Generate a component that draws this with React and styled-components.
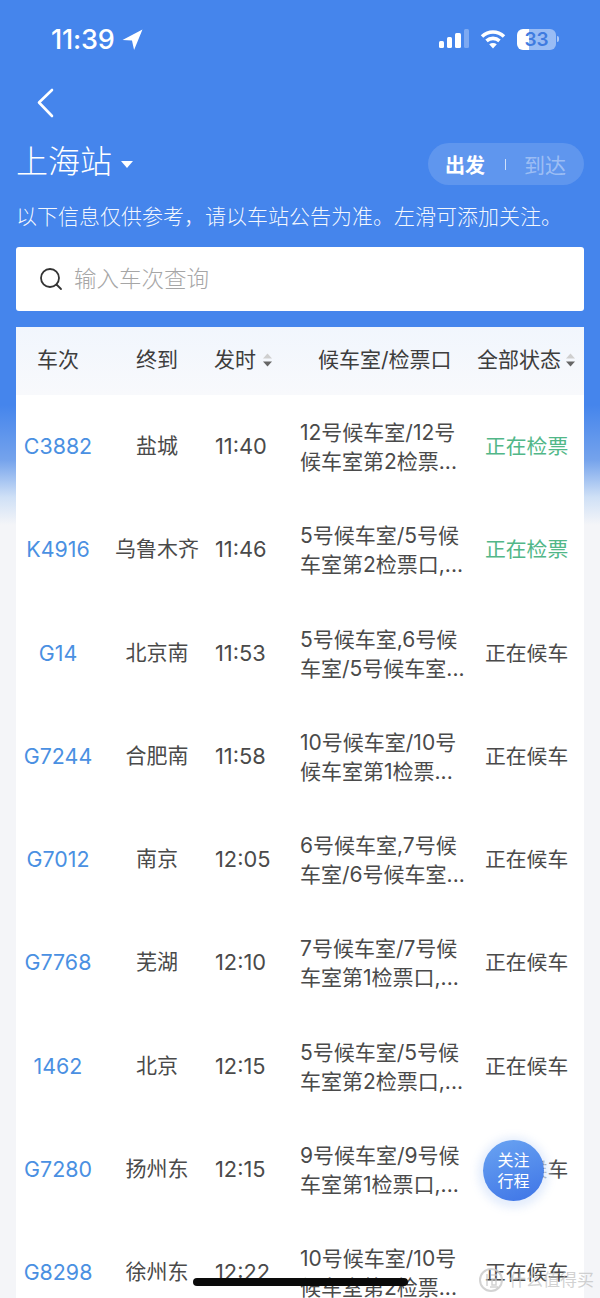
import React from "react";
import styled, { createGlobalStyle } from "styled-components";

const Global = createGlobalStyle`
  html, body { margin: 0; padding: 0; background: #f4f5f9; }
  * { box-sizing: border-box; }
`;

const Page = styled.div`
  position: relative;
  width: 600px;
  height: 1298px;
  overflow: hidden;
  font-family: Inter, "Noto Sans CJK SC", sans-serif;
  color: #444;
  background: linear-gradient(180deg, #4585ec 0, #4585ec 405px, #75a3ec 460px, #cfe0f6 497px, #f4f5f8 525px);
`;

const StatusBar = styled.div`
  height: 80px;
  padding: 22px 44px 0 51px;
  display: flex;
  align-items: flex-start;
  justify-content: space-between;
  color: #fff;
`;

const Clock = styled.div`
  display: flex;
  align-items: center;
  gap: 7px;
  height: 34px;
  font-size: 27px;
  font-weight: 500;
  letter-spacing: -0.2px;
`;

const StatusIcons = styled.div`
  display: flex;
  align-items: center;
  gap: 11px;
  height: 34px;
`;

const Battery = styled.div`
  position: relative;
  width: 39px;
  height: 21px;
  border-radius: 6px;
  background: linear-gradient(90deg, #fff 0, #fff 30%, rgba(255,255,255,.45) 30%);
  color: #3f7be0;
  font-size: 19px;
  font-weight: 600;
  line-height: 21px;
  text-align: center;
  &::after {
    content: "";
    position: absolute;
    right: -3px;
    top: 7px;
    width: 2px;
    height: 6px;
    border-radius: 0 2px 2px 0;
    background: rgba(255,255,255,.55);
  }
`;

const BackRow = styled.div`
  height: 46px;
  padding-left: 36px;
  display: flex;
  align-items: center;
`;

const TitleRow = styled.div`
  height: 76px;
  padding: 0 16px;
  display: flex;
  align-items: center;
  justify-content: space-between;
`;

const StationName = styled.div`
  display: flex;
  align-items: center;
  gap: 9px;
  margin-top: -4px;
  color: #fff;
  font-size: 32px;
  font-weight: 300;
  line-height: 40px;
`;

const Caret = styled.span`
  width: 0;
  height: 0;
  margin-top: 4px;
  border-left: 6.5px solid transparent;
  border-right: 6.5px solid transparent;
  border-top: 7.5px solid #fff;
`;

const Toggle = styled.div`
  width: 156px;
  height: 42px;
  border-radius: 21px;
  background: rgba(255,255,255,.14);
  display: flex;
  align-items: center;
  padding-left: 17px;
  font-size: 21px;
  color: #fff;
`;

const ToggleOn = styled.span`
  font-size: 20px;
  font-weight: 700;
`;

const ToggleSep = styled.span`
  width: 1px;
  height: 11px;
  margin: 0 18px 0 20px;
  background: rgba(255,255,255,.7);
`;

const ToggleOff = styled.span`
  color: rgba(255,255,255,.4);
`;

const Notice = styled.div`
  padding: 0 16px;
  height: 45px;
  color: rgba(255,255,255,.95);
  font-size: 21px;
  font-weight: 300;
  line-height: 30px;
  white-space: nowrap;
`;

const SearchBox = styled.div`
  margin: 0 16px;
  height: 64px;
  border-radius: 3px;
  background: #fff;
  display: flex;
  align-items: center;
  gap: 11px;
  padding-left: 23px;
  color: #a6a6a6;
  font-size: 22.5px;
  font-weight: 300;
`;

const SearchText = styled.span`
  margin-top: -5px;
`;

const Table = styled.div`
  margin: 16px 16px 0;
  background: #fff;
  border-radius: 2px 2px 0 0;
`;

const Row = styled.div`
  display: grid;
  grid-template-columns: 84px 114px 85px 178px 1fr;
  align-items: center;
  height: ${p => p.$h}px;
  background: ${p => p.$head ? "linear-gradient(180deg, #f1f6fd, #f8f9fc)" : "#fff"};
`;

const HeadCell = styled.div`
  display: flex;
  align-items: center;
  justify-content: ${p => p.$left ? "flex-start" : "center"};
  gap: ${p => p.$gap || 6}px;
  margin-top: -5px;
  padding-left: ${p => p.$pad || 0}px;
  color: #3d3d3d;
  font-size: 21px;
  font-weight: 400;
  white-space: nowrap;
`;

const SortIcon = styled.svg`
  flex: none;
  margin-top: 4px;
`;

const TrainNo = styled.div`
  text-align: center;
  color: #4a90e2;
  font-size: 21.4px;
  font-weight: 400;
`;

const Dest = styled.div`
  margin-top: -4px;
  text-align: center;
  color: #4a4a4a;
  font-size: 21px;
  font-weight: 400;
  white-space: nowrap;
`;

const Time = styled.div`
  margin-left: 1px;
  color: #4a4a4a;
  font-size: 21.8px;
  font-weight: 400;
  white-space: nowrap;
`;

const Room = styled.div`
  margin: 2px 0 0 1px;
  color: #4a4a4a;
  font-size: 21px;
  font-weight: 400;
  line-height: 29px;
  white-space: pre;
`;

const Status = styled.div`
  margin: -2px 0 0 8px;
  color: ${p => p.$on ? "#52b788" : "#4a4a4a"};
  font-size: 20.8px;
  font-weight: 400;
  white-space: nowrap;
`;

const Fab = styled.div`
  position: absolute;
  left: 483px;
  top: 1140px;
  width: 61px;
  height: 61px;
  border-radius: 50%;
  background: linear-gradient(160deg, #6aa4f2, #3e74e6);
  box-shadow: 0 2px 8px 5px rgba(225,235,252,.9);
  color: #fff;
  display: flex;
  align-items: center;
  justify-content: center;
  text-align: center;
  font-size: 16px;
  line-height: 21px;
`;

const HomeBar = styled.div`
  position: absolute;
  left: 193px;
  top: 1278px;
  width: 215px;
  height: 8px;
  border-radius: 4px;
  background: #0a0a0a;
`;

const Watermark = styled.div`
  position: absolute;
  left: 478px;
  top: 1267px;
  display: flex;
  align-items: center;
  gap: 5px;
  color: rgba(190,190,190,.7);
  font-size: 17px;
  line-height: 26px;
  white-space: nowrap;
`;

const rows = [
  ["C3882", "盐城", "11:40", "12号候车室/12号\n候车室第2检票...", "正在检票", true],
  ["K4916", "乌鲁木齐", "11:46", "5号候车室/5号候\n车室第2检票口,...", "正在检票", true],
  ["G14", "北京南", "11:53", "5号候车室,6号候\n车室/5号候车室...", "正在候车"],
  ["G7244", "合肥南", "11:58", "10号候车室/10号\n候车室第1检票...", "正在候车"],
  ["G7012", "南京", "12:05", "6号候车室,7号候\n车室/6号候车室...", "正在候车"],
  ["G7768", "芜湖", "12:10", "7号候车室/7号候\n车室第1检票口,...", "正在候车"],
  ["1462", "北京", "12:15", "5号候车室/5号候\n车室第2检票口,...", "正在候车"],
  ["G7280", "扬州东", "12:15", "9号候车室/9号候\n车室第1检票口,...", "正在候车"],
  ["G8298", "徐州东", "12:22", "10号候车室/10号\n候车室第2检票...", "正在候车"],
];

const Sort = () => (
  <SortIcon width="11" height="16" viewBox="0 0 11 16">
    <path d="M5.500 1.500l4.500 5H1z" fill="#cfcfcf" />
    <path d="M5.500 14.500l4.500-5H1z" fill="#666" />
  </SortIcon>
);

export default function App() {
  return (
    <Page>
      <Global />
      <StatusBar>
        <Clock>
          11:39
          <svg width="21" height="21" viewBox="0 0 20 20">
            <path d="M19.500.5L.5 10.500l9 .5 2 9z" fill="#fff" />
          </svg>
        </Clock>
        <StatusIcons>
          <svg width="30" height="20" viewBox="0 0 30 20">
            <rect x="0" y="12" width="5" height="7" rx="1.500" fill="#fff" />
            <rect x="8" y="8" width="5" height="11" rx="1.500" fill="#fff" />
            <rect x="16" y="4" width="6" height="15" rx="1.500" fill="#fff" />
            <rect x="25" y="0" width="5" height="19" rx="1.500" fill="#fff" opacity=".3" />
          </svg>
          <svg width="26" height="20" viewBox="0 0 26 20" fill="none" stroke="#fff" strokeWidth="3.600">
            <path d="M2 7.500c6.500-6 15.500-6 22 0" />
            <path d="M6.500 11.800c3.800-3.300 9.200-3.300 13 0" />
            <path d="M13 19.500l-3.800-4.200c2.300-1.700 5.300-1.700 7.600 0z" fill="#fff" stroke="none" />
          </svg>
          <Battery>33</Battery>
        </StatusIcons>
      </StatusBar>
      <BackRow>
        <svg width="20" height="30" viewBox="0 0 20 30" fill="none" stroke="#fff" strokeWidth="2.600" strokeLinecap="round" strokeLinejoin="round">
          <path d="M16 2L3 14.500 16 28" />
        </svg>
      </BackRow>
      <TitleRow>
        <StationName>上海站<Caret /></StationName>
        <Toggle>
          <ToggleOn>出发</ToggleOn>
          <ToggleSep />
          <ToggleOff>到达</ToggleOff>
        </Toggle>
      </TitleRow>
      <Notice>以下信息仅供参考，请以车站公告为准。左滑可添加关注。</Notice>
      <SearchBox>
        <svg width="24" height="24" viewBox="0 0 24 24" fill="none" stroke="#333" strokeWidth="1.800" strokeLinecap="round">
          <circle cx="11" cy="11" r="9" />
          <path d="M17.500 17.500L22 22" />
        </svg>
        <SearchText>输入车次查询</SearchText>
      </SearchBox>
      <Table>
        <Row $head $h={67.5}>
          <HeadCell>车次</HeadCell>
          <HeadCell>终到</HeadCell>
          <HeadCell $left>发时<Sort /></HeadCell>
          <HeadCell $left $pad={19}>候车室/检票口</HeadCell>
          <HeadCell $left $gap={4}>全部状态<Sort /></HeadCell>
        </Row>
        {rows.map(r => (
          <Row key={r[0]} $h={103.25}>
            <TrainNo>{r[0]}</TrainNo>
            <Dest>{r[1]}</Dest>
            <Time>{r[2]}</Time>
            <Room>{r[3]}</Room>
            <Status $on={r[5]}>{r[4]}</Status>
          </Row>
        ))}
      </Table>
      <Fab>关注<br />行程</Fab>
      <Watermark>
        <svg width="26" height="26" viewBox="0 0 26 26" fill="none" stroke="rgba(200,200,200,.8)" strokeWidth="2">
          <circle cx="13" cy="13" r="11" />
          <path d="M9 7v12M13 8h6M14 12h4v6h-4zM12 20h8" strokeWidth="1.500" />
        </svg>
        什么值得买
      </Watermark>
      <HomeBar />
    </Page>
  );
}
